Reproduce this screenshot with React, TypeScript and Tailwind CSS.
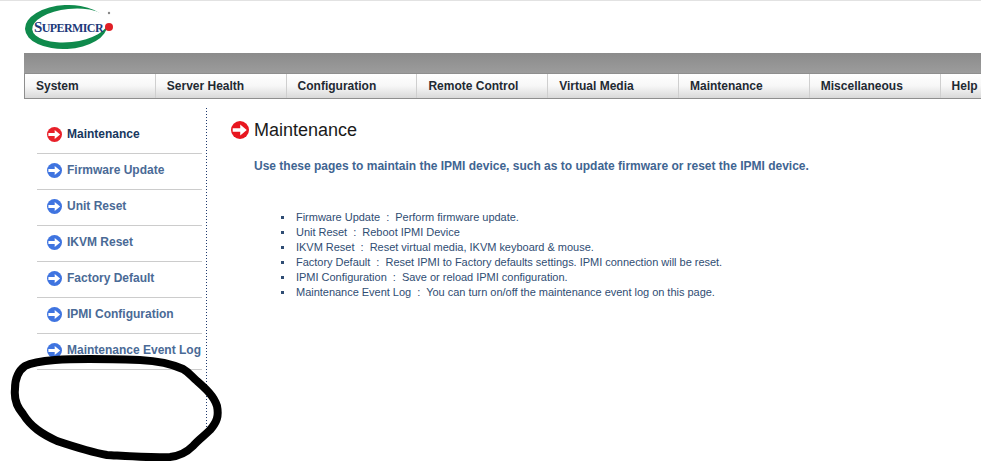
const tabs = ['System', 'Server Health', 'Configuration', 'Remote Control', 'Virtual Media', 'Maintenance', 'Miscellaneous', 'Help'];

const sideItems = ['Maintenance', 'Firmware Update', 'Unit Reset', 'IKVM Reset', 'Factory Default', 'IPMI Configuration', 'Maintenance Event Log'];

const descriptions = [
  ['Firmware Update', 'Perform firmware update.'],
  ['Unit Reset', 'Reboot IPMI Device'],
  ['IKVM Reset', 'Reset virtual media, IKVM keyboard & mouse.'],
  ['Factory Default', 'Reset IPMI to Factory defaults settings. IPMI connection will be reset.'],
  ['IPMI Configuration', 'Save or reload IPMI configuration.'],
  ['Maintenance Event Log', 'You can turn on/off the maintenance event log on this page.'],
];

function ArrowIcon({ color, size }: { color: string; size: number }) {
  return (
    <svg width={size} height={size} viewBox="0 0 16 16" className="shrink-0">
      <circle cx="8" cy="8" r="8" fill={color} />
      <path d="M1.5 6.4H8.2V3.2L14 8 8.2 12.8V9.6H1.5z" fill="#fff" />
    </svg>
  );
}

function Logo() {
  return (
    <div className="relative h-[46px] w-[92px]">
      <svg width="92" height="46" viewBox="0 0 92 46" className="absolute left-0 top-0">
        <ellipse cx="41" cy="23" rx="41" ry="22" fill="#0f8a4c" transform="rotate(-3 41 23)" />
        <ellipse cx="45" cy="21.5" rx="38" ry="16.5" fill="#fff" transform="rotate(-6 45 21.5)" />
        <circle cx="84" cy="23" r="4" fill="#e01f26" />
        <circle cx="84" cy="9" r="1.2" fill="#888" />
      </svg>
      <span className="absolute left-[9px] top-[13px] font-['Liberation_Serif',serif] text-[15px] font-bold leading-[20px] tracking-[-0.6px] text-[#1d3a7a]">
        S<span className="text-[12px]">UPERMICR</span>
      </span>
    </div>
  );
}

function Scribble() {
  return (
    <svg width="240" height="125" viewBox="0 0 240 125" className="absolute left-0 top-[345px]">
      <path
        d="M25 20C33 16 43 15 55 14C80 12 112 13 140 14C158 15 172 18 183 23C190 27 192 31 197 35C205 42 214 50 217 60C219 70 217 76 210 84C204 90 198 94 193 100C186 107 180 110 170 111C150 112 125 110 107 109C90 106 75 101 57 95C42 88 31 81 23 68C16 60 14 52 15 43C15 32 18 25 25 20Z"
        fill="none"
        stroke="#000"
        strokeWidth="8"
        strokeLinejoin="round"
      />
    </svg>
  );
}

export default function App() {
  return (
    <div className="relative h-[461px] w-[981px] overflow-hidden border-t border-[#e2e2e2] bg-white font-['Liberation_Sans',Arial,sans-serif]">
      <div className="pl-[25px] pt-[3px]">
        <Logo />
      </div>

      <div className="ml-[24px] mt-[3px]">
        <div className="h-[20px] bg-gradient-to-b from-[#8b8b8b] to-[#9c9c9c]" />
        <div className="flex h-[26px] border-y border-l border-[#8e8e8e] bg-gradient-to-b from-white via-[#f7f7f7] to-[#d9d9d9]">
          {tabs.map((tab) => (
            <div
              key={tab}
              className="flex w-[130.8px] shrink-0 items-center border-r border-[#cfcfcf] pl-[11px] text-[12px] font-bold text-[#1f2a33]"
            >
              {tab}
            </div>
          ))}
        </div>
      </div>

      <div className="flex pt-[9px]">
        <div className="ml-[37px] h-[322px] w-[165px] pt-[10px]">
          {sideItems.map((item, i) => (
            <div key={item} className="flex h-[36px] items-center gap-[5px] border-b border-[#cccccc] pb-[3px] pl-[10px]">
              <ArrowIcon color={i === 0 ? '#e8202a' : '#3f74e0'} size={15} />
              <span
                className={`whitespace-nowrap text-[12px] font-bold ${
                  i === 0 ? 'text-[#17375e]' : 'text-[#4a6a96]'
                }`}
              >
                {item}
              </span>
            </div>
          ))}
        </div>

        <div className="ml-[4px] h-[322px] w-px bg-[linear-gradient(#1f3a6e_34%,transparent_34%)] bg-[length:1px_3px]" />

        <div className="pl-[24px] pt-[11px]">
          <div className="flex items-center gap-[5px]">
            <ArrowIcon color="#e8161f" size={18} />
            <h1 className="text-[18px] leading-[22px] text-[#1a1a1a]">Maintenance</h1>
          </div>
          <p className="ml-[23px] mt-[17px] whitespace-nowrap text-[12px] font-bold leading-[16px] text-[#3f6592]">
            Use these pages to maintain the IPMI device, such as to update firmware or reset the IPMI device.
          </p>
          <ul className="ml-[50px] mt-[36px] text-[11px] leading-[15px] tracking-[-0.02px] text-[#2f4d73]">
            {descriptions.map(([name, desc]) => (
              <li key={name} className="flex items-center whitespace-pre">
                <span className="mr-[12px] h-[3px] w-[3px] bg-[#2f4d73]" />
                {name}  :  {desc}
              </li>
            ))}
          </ul>
        </div>
      </div>

      <Scribble />
    </div>
  );
}
